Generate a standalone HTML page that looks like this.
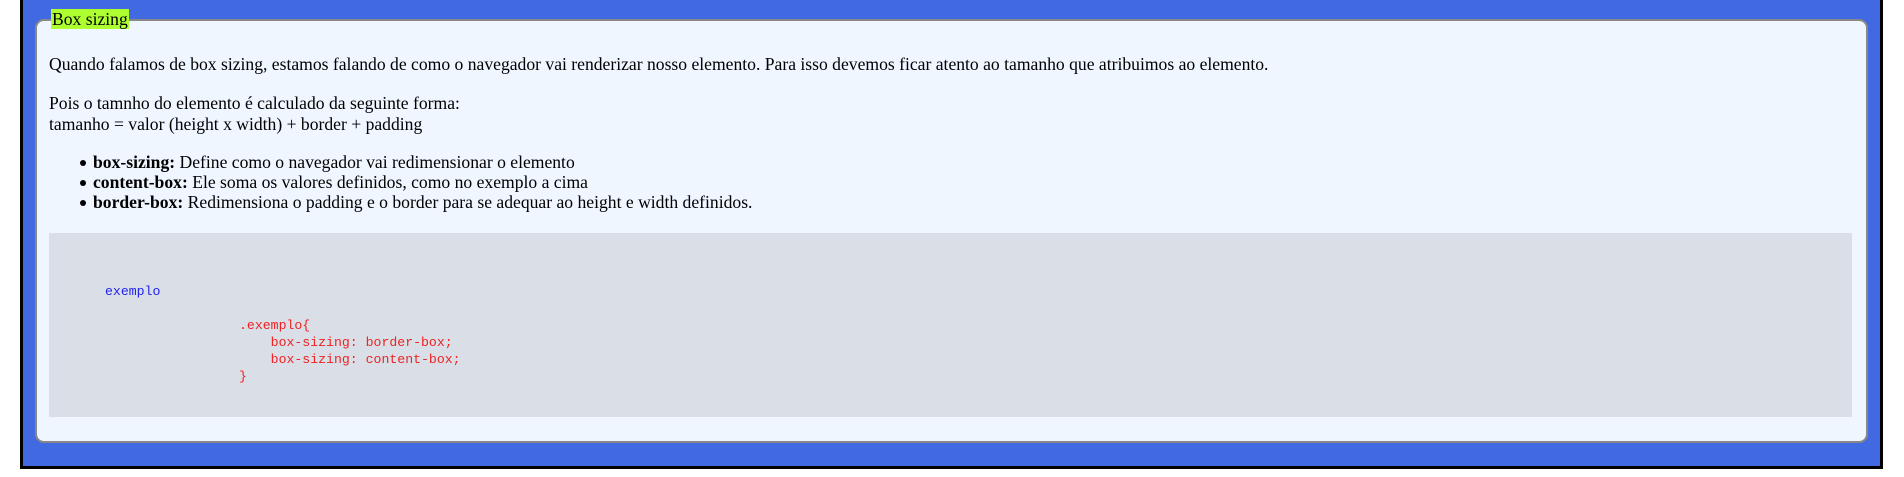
<!DOCTYPE html>
<html><head><meta charset="utf-8"><style>
html,body{margin:0;padding:0;width:1904px;height:477px;background:#fff;overflow:hidden;position:relative;font-family:"Liberation Serif",serif;font-size:17.6px;color:#000}
.outer{position:absolute;left:20px;top:-10px;width:1857px;height:473px;background:#4169e1;border:3px solid #000}
.fs{position:absolute;left:35px;top:19px;width:1829px;height:420px;background:#eff6ff;border:2px solid #888;border-radius:9px}
.leg{position:absolute;left:51px;top:9px;height:20px;line-height:20px;background:#adff2f;padding:0 1px}
.t{position:absolute;left:49px;white-space:nowrap;line-height:21px}
.code{position:absolute;left:49px;top:233px;width:1803px;height:184px;background:#dadfe7}
.c{position:absolute;font-family:"Liberation Mono",monospace;font-size:13.2px;line-height:17px;white-space:pre;color:#e22}
.b{position:absolute;left:80px;width:6px;height:6px;border-radius:50%;background:#000}
</style></head><body>
<div class="outer"></div>
<div class="fs"></div>
<div class="leg">Box sizing</div>
<div class="t" style="top:54px">Quando falamos de box sizing, estamos falando de como o navegador vai renderizar nosso elemento. Para isso devemos ficar atento ao tamanho que atribuimos ao elemento.</div>
<div class="t" style="top:93px">Pois o tamnho do elemento é calculado da seguinte forma:</div>
<div class="t" style="top:114px">tamanho = valor (height x width) + border + padding</div>
<div class="b" style="top:160px"></div>
<div class="t" style="left:93px;top:152px"><b>box-sizing:</b> Define como o navegador vai redimensionar o elemento</div>
<div class="b" style="top:180px"></div>
<div class="t" style="left:93px;top:172px"><b>content-box:</b> Ele soma os valores definidos, como no exemplo a cima</div>
<div class="b" style="top:200px"></div>
<div class="t" style="left:93px;top:192px"><b>border-box:</b> Redimensiona o padding e o border para se adequar ao height e width definidos.</div>
<div class="code"></div>
<div class="c" style="left:105px;top:283px;color:#22e">exemplo</div>
<div class="c" style="left:239px;top:317px">.exemplo{
    box-sizing: border-box;
    box-sizing: content-box;
}</div>
</body></html>
